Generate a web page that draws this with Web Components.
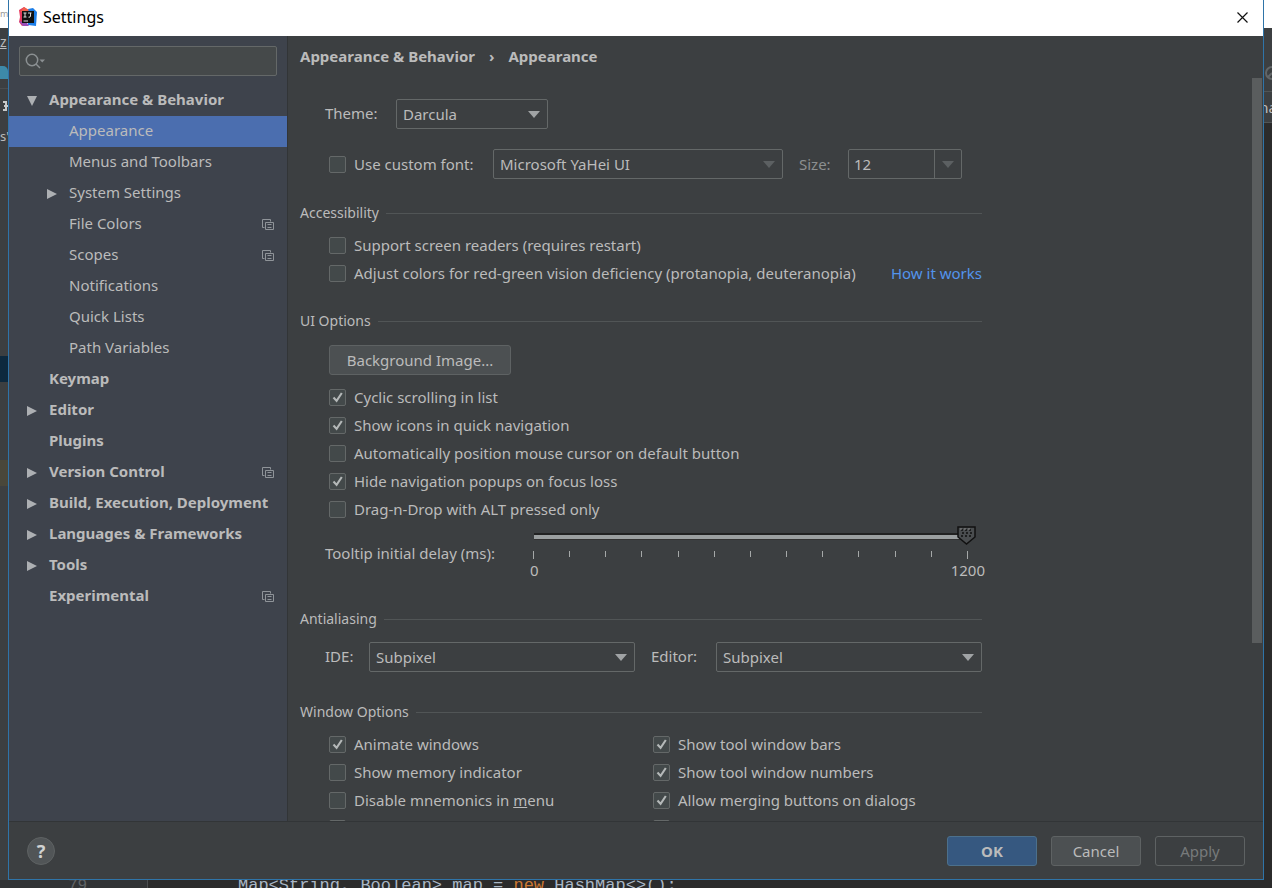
<!DOCTYPE html>
<html lang="en">
<head>
<meta charset="utf-8">
<title>Settings</title>
<style>
:root{
  --panel:#3c3f41;--side:#3e434c;--text:#bbbbbb;--line:#515556;--edge:#646868;
  --field:#45494a;--accent:#4b6eaf;--frame:#2f74a8;
}
html,body{height:100%}
body{margin:0;background:#2b2b2b;color:var(--text);font:15px/20px "Noto Sans","Open Sans",sans-serif;overflow:hidden}
</style>
</head>
<body>
<settings-app></settings-app>

<script>
const define = (name, html, setup) => {
  const t = document.createElement('template');
  t.innerHTML = html;
  customElements.define(name, class extends HTMLElement {
    connectedCallback() {
      if (this.shadowRoot) return;
      const root = this.attachShadow({mode: 'open'});
      root.append(t.content.cloneNode(true));
      if (setup) setup(this, root);
    }
  });
};

/* ---------- controls ---------- */

define('check-box', `
<style>
:host{display:flex;align-items:center;height:28px}
label{display:flex;align-items:center;gap:8px;white-space:nowrap}
input{appearance:none;box-sizing:border-box;margin:0;width:17px;height:17px;flex:none;border:1px solid var(--edge);border-radius:2px;background:#43494a center/15px 15px no-repeat}
input:checked{background-image:url("data:image/svg+xml,%3Csvg xmlns='http://www.w3.org/2000/svg' viewBox='0 0 15 15'%3E%3Cpath d='M3.5 7.5 6.6 10.9 11.8 3' fill='none' stroke='%23b4b8b8' stroke-width='2.1'/%3E%3C/svg%3E")}
</style>
<label><input type="checkbox"><span><slot></slot></span></label>`,
(el, root) => { root.querySelector('input').checked = el.hasAttribute('checked'); });

define('select-field', `
<style>
:host{display:flex;align-items:center}
label{flex:none;width:var(--label,auto);padding-bottom:2px}
select{appearance:none;box-sizing:border-box;flex:1;min-width:0;height:30px;margin:0;padding:0 24px 0 6px;border:1px solid var(--edge);border-radius:2px;font:inherit;color:var(--text);
background:var(--panel) url("data:image/svg+xml,%3Csvg xmlns='http://www.w3.org/2000/svg' viewBox='0 0 12 7'%3E%3Cpath d='M0 0H12L6 7Z' fill='%23a0a3a5'/%3E%3C/svg%3E") right 7px center/12px 7px no-repeat}
:host([dim]) select{background-image:url("data:image/svg+xml,%3Csvg xmlns='http://www.w3.org/2000/svg' viewBox='0 0 12 7'%3E%3Cpath d='M0 0H12L6 7Z' fill='%235c6062'/%3E%3C/svg%3E")}
</style>
<label for="s"></label><select id="s"><option></option></select>`,
(el, root) => {
  const label = root.querySelector('label'), text = el.getAttribute('label');
  if (text) label.textContent = text;
  else { label.remove(); root.querySelector('select').setAttribute('aria-label', el.getAttribute('name')); }
  root.querySelector('option').textContent = el.getAttribute('value');
});

define('size-field', `
<style>
:host{display:flex;align-items:center}
label{width:49px;color:#8c8f90}
div{display:flex;box-sizing:border-box;width:114px;height:30px;border:1px solid var(--edge);border-radius:2px}
input{flex:1;min-width:0;box-sizing:border-box;border:0;padding:0 5px;background:none;color:var(--text);font:inherit}
button{width:27px;padding:0;border:0;border-left:1px solid var(--edge);background:none;display:grid;place-items:center}
</style>
<label for="n">Size:</label>
<div><input id="n" value="12"><button aria-label="Choose size"><svg width="12" height="7"><path d="M0 0H12L6 7Z" fill="#5c6062"/></svg></button></div>`);

define('push-button', `
<style>
:host{display:block}
button{box-sizing:border-box;width:100%;height:30px;padding:0;border:1px solid #5e6263;border-radius:3px;background:#4c5052;color:var(--text);font:inherit}
:host([primary]) button{background:#365880;border-color:#4c708c;font-weight:bold}
:host([off]) button{background:none;color:#777a7b}
</style>
<button><slot></slot></button>`,
(el, root) => { root.querySelector('button').disabled = el.hasAttribute('off'); });

define('delay-slider', `
<style>
:host{display:flex;align-items:center;height:62px;justify-content:space-between}
label{flex:none;padding-bottom:2px}
.scale{width:451px;height:62px;display:grid;grid-template-rows:27px 10px 20px}
input{appearance:none;width:100%;height:27px;margin:0;background:none}
input::-webkit-slider-runnable-track{height:7px;background:linear-gradient(#222 0 2px,#9b9fa0 2px 6px,#333 6px) 9px 0/calc(100% - 18px) 7px no-repeat}
input::-webkit-slider-thumb{appearance:none;width:19px;height:19px;margin:-7px 0 0;border:0;background:url("data:image/svg+xml,%3Csvg xmlns='http://www.w3.org/2000/svg' viewBox='0 0 19 19'%3E%3Cpath d='M1 1H18V11L9.500 18 1 11Z' fill='%234a4d4f' stroke='%23111' stroke-width='1.500'/%3E%3Cpath d='M4 4H6M8 4H10M12 4H14M5 7H7M9 7H11M13 7H15M4 10H6M8 10H10M12 10H14' stroke='%23111' stroke-width='1.500'/%3E%3Cpath d='M3 3H5M7 3H9M11 3H13' stroke='%23888'/%3E%3C/svg%3E") center/19px 19px no-repeat}
.ticks{display:flex;justify-content:space-between;padding:1px 8px 0 8px}
i{width:1px;height:6px;background:#a5a8a8}
i:first-child,i:last-child{height:8px}
.ends{display:flex;justify-content:space-between;margin:0 -9px 0 5px}
</style>
<label for="r">Tooltip initial delay (ms):</label>
<div class="scale"><input id="r" type="range" min="0" max="1200" step="100" value="1200">
<div class="ticks">${'<i></i>'.repeat(13)}</div>
<div class="ends"><span>0</span><span>1200</span></div></div>`);

define('option-group', `
<style>
:host{display:block;margin-top:24px}
h2{display:flex;align-items:center;gap:7px;margin:0;height:20px;font-size:14px;font-weight:normal;white-space:nowrap}
h2::after{content:"";flex:1;height:1px;background:var(--line)}
div{padding:var(--inset,8px) 0 0 29px}
</style>
<h2></h2><div><slot></slot></div>`,
(el, root) => { root.querySelector('h2').textContent = el.getAttribute('heading'); });

/* ---------- sidebar ---------- */

define('tree-item', `
<style>
:host{display:block}
a{display:flex;align-items:center;height:31px;padding:0 13px 0 40px;color:var(--text);text-decoration:none;white-space:nowrap;font-weight:bold}
:host([sub]) a{padding-left:60px;font-weight:normal}
:host([selected]) a{background:var(--accent)}
span{padding-bottom:3px}
.arrow{display:none;width:12px;height:12px;margin:0 11px 0 -23px;fill:#adb0b3}
:host([closed]) .arrow,:host([open]) .arrow{display:block}
:host([open]) .arrow{transform:rotate(90deg)}
.copy{display:none;margin-left:auto;width:12px;height:12px;fill:none;stroke:#8f9499}
:host([shared]) .copy{display:block}
</style>
<a href="#"><svg class="arrow" viewBox="0 0 12 12"><path d="M1 1 11 6 1 11Z"/></svg><span><slot></slot></span>
<svg class="copy" viewBox="0 0 12 12"><path d="M2.500 8.500H.5V.5H8.500V2.500M3.500 3.500H11.500V10.500H3.500ZM5.500 5.500H9.500M5.500 8.500H9.500"/></svg></a>`);

define('search-box', `
<style>
:host{display:flex;align-items:center;box-sizing:border-box;height:30px;margin:10px 10px 9px;padding:0 5px;gap:4px;border:1px solid var(--edge);border-radius:2px;background:var(--field)}
input{flex:1;min-width:0;border:0;padding:0;background:none;color:var(--text);font:inherit;outline:0}
</style>
<svg width="21" height="18" viewBox="0 0 21 18" fill="none" stroke="#8b9092" stroke-width="1.500"><circle cx="7" cy="8" r="5.700"/><path d="M11 12 15 16"/><path d="M14.500 7.500H20L17.250 10.500Z" fill="#8b9092" stroke="none"/></svg>
<input type="search" aria-label="Search settings">`);

define('settings-tree', `
<style>
:host{display:block;background:var(--side);border-right:1px solid #323537;overflow:hidden}
</style>
<search-box></search-box>
<nav>
<tree-item open>Appearance &amp; Behavior</tree-item>
<tree-item sub selected>Appearance</tree-item>
<tree-item sub>Menus and Toolbars</tree-item>
<tree-item sub closed>System Settings</tree-item>
<tree-item sub shared>File Colors</tree-item>
<tree-item sub shared>Scopes</tree-item>
<tree-item sub>Notifications</tree-item>
<tree-item sub>Quick Lists</tree-item>
<tree-item sub>Path Variables</tree-item>
<tree-item>Keymap</tree-item>
<tree-item closed>Editor</tree-item>
<tree-item>Plugins</tree-item>
<tree-item closed shared>Version Control</tree-item>
<tree-item closed>Build, Execution, Deployment</tree-item>
<tree-item closed>Languages &amp; Frameworks</tree-item>
<tree-item closed>Tools</tree-item>
<tree-item shared>Experimental</tree-item>
</nav>`);

/* ---------- main panel ---------- */

define('appearance-page', `
<style>
:host{display:grid;grid-template-rows:42px 1fr;min-width:0;min-height:0;background:var(--panel)}
h1{display:flex;align-items:center;gap:14px;margin:0;padding:0 0 2px 12px;font-size:15px}
.view{display:grid;grid-template-columns:1fr 11px;min-height:0;overflow:hidden}
.thumb{height:76%;background:#5a5d5e;margin-right:1px}
.body{min-height:0;box-sizing:border-box;max-width:694px;padding:21px 0 0 12px}
.theme{width:223px;margin-left:25px;--label:71px}
.font{display:flex;margin:20px 0 0 29px;height:30px;align-items:center}
.font check-box{width:164px}
.font select-field{width:290px;margin-right:16px}
.link{display:flex;align-items:center;justify-content:space-between;white-space:nowrap}
a{color:#5394ec;text-decoration:none}
.ui{--inset:14px}
.ui push-button{width:182px;margin-bottom:8px}
delay-slider{margin:0 6px 0 -4px}
.aa{--inset:13px}
.pair{display:flex;gap:16px;margin-left:-4px}
.pair select-field:first-child{flex:1 1 310px;--label:44px}
.pair select-field{flex:1 1 331px;--label:65px}
.win{margin-top:30px}
.cols{display:grid;grid-template-columns:324px 1fr}
</style>
<h1><span>Appearance &amp; Behavior</span><span>›</span><span>Appearance</span></h1>
<div class="view"><div class="body">
<select-field class="theme" label="Theme:" value="Darcula"></select-field>
<div class="font"><check-box>Use custom font:</check-box><select-field dim name="Font" value="Microsoft YaHei UI"></select-field><size-field></size-field></div>
<option-group heading="Accessibility">
<check-box>Support screen readers (requires restart)</check-box>
<div class="link"><check-box>Adjust colors for red-green vision deficiency (protanopia, deuteranopia)</check-box><a href="#">How it works</a></div>
</option-group>
<option-group class="ui" heading="UI Options">
<push-button>Background Image...</push-button>
<check-box checked>Cyclic scrolling in list</check-box>
<check-box checked>Show icons in quick navigation</check-box>
<check-box>Automatically position mouse cursor on default button</check-box>
<check-box checked>Hide navigation popups on focus loss</check-box>
<check-box>Drag-n-Drop with ALT pressed only</check-box>
<delay-slider></delay-slider>
</option-group>
<option-group class="aa" heading="Antialiasing">
<div class="pair"><select-field label="IDE:" value="Subpixel"></select-field><select-field label="Editor:" value="Subpixel"></select-field></div>
</option-group>
<option-group class="win" heading="Window Options">
<div class="cols">
<check-box checked>Animate windows</check-box><check-box checked>Show tool window bars</check-box>
<check-box>Show memory indicator</check-box><check-box checked>Show tool window numbers</check-box>
<check-box>Disable mnemonics in <u>m</u>enu</check-box><check-box checked>Allow merging buttons on dialogs</check-box>
<check-box></check-box><check-box></check-box>
</div>
</option-group>
</div><div class="thumb"></div></div>`);

/* ---------- window ---------- */

define('title-bar', `
<style>
:host{display:flex;align-items:center;box-sizing:border-box;height:36px;padding:0 13px 2px 9px;background:#fff;color:#000}
span{flex:1;margin-left:6px;font-size:16px}
button{width:16px;height:16px;padding:0;border:0;background:none;display:grid;place-items:center}
</style>
<svg width="19" height="20" viewBox="0 0 19 20"><path d="M1 3 6 0 10 3 9 17 4 19 1 15 2 10Z" fill="#e8385e"/><path d="M10 2 15 1 19 5 18 19 10 18Z" fill="#1c7ee8"/><path d="M6 0 11 3 9 5 2 5Z" fill="#f0604c"/><path d="M1 14 9 16 11 19 5 19Z" fill="#9a4fb8"/><path d="M4 4H16V16H4Z" fill="#111"/><path d="M5.500 6H8.500M7 6V10M5.500 10H8.500M10 6H13.500M12.500 6V9Q12.500 10.500 10.500 10.200" fill="none" stroke="#ddd"/><path d="M5.500 14H10" stroke="#ddd"/></svg>
<span>Settings</span>
<button aria-label="Close"><svg width="11" height="11" viewBox="0 0 11 11"><path d="M.5.5 10.500 10.500M10.500.5.5 10.500" stroke="#111" stroke-width="1.200"/></svg></button>`);

define('button-bar', `
<style>
:host{display:flex;align-items:center;gap:14px;height:57px;padding:0 18px;border-top:1px solid #323537;background:var(--panel)}
.help{width:28px;height:28px;margin-right:auto;padding:0;border:1px solid #5e6263;border-radius:50%;background:#515557;color:#d0d2d2;font:bold 18px/24px "Noto Sans",sans-serif}
push-button{width:90px}
</style>
<button class="help" aria-label="Help">?</button>
<push-button primary>OK</push-button><push-button>Cancel</push-button><push-button off>Apply</push-button>`);

define('settings-dialog', `
<style>
:host{display:grid;grid-template-rows:36px 1fr auto;box-sizing:border-box;min-height:0;border:1px solid var(--frame);border-top:0}
main{display:grid;grid-template-columns:279px 1fr;min-height:0}
</style>
<title-bar></title-bar>
<main><settings-tree></settings-tree><appearance-page></appearance-page></main>
<button-bar></button-bar>`);

/* ---------- editor window visible around the dialog ---------- */

define('editor-left', `
<style>
:host{display:flex;flex-direction:column;overflow:hidden;background:#3c3f41;white-space:nowrap;font-size:14px}
div{flex:none;height:28px;line-height:28px}
.top{background:#fff;color:#999;font-size:9px}
.folder{height:32px;display:flex;align-items:center}
.folder i{width:8px;height:13px;background:#3d8aa9;border-radius:0 5px 0 0}
.tab{height:33px;border-top:1px solid #4a4d4f;display:flex;align-items:center;justify-content:end}
.blue{height:26px;background:#0d293e}
.olive{height:26px;background:#49473a}
.path{font-size:13px}
</style>
<div class="top">m</div><div><u>z</u></div><div class="folder"><i></i></div>
<div class="tab"><svg width="5" height="10" fill="#c8caca"><path d="M0 0H4V4H5V6H4V10H0V8H2V6H1V4H2V2H0Z"/></svg></div><div class="path">s'</div>
<div style="height:206px"></div><div class="blue"></div><div style="height:78px"></div><div class="olive"></div>`);

define('editor-right', `
<style>
:host{display:flex;flex-direction:column;overflow:hidden;background:#2b2b2b;white-space:nowrap}
div{flex:none}
.top{height:28px;background:#fff}
.bar{height:63px;background:#3c3f41;display:flex;align-items:center;padding-top:0}
.bar svg{margin-top:26px}
.tab{height:30px;line-height:30px;background:#3c3f41;border-top:1px solid #515556;border-bottom:1px solid #515556;display:flex;justify-content:center}
</style>
<div class="top"></div><div class="bar"><svg width="8" height="16" fill="none" stroke="#626668" stroke-width="2"><circle cx="8" cy="8" r="6"/><path d="M4 12 8 8"/></svg></div><div class="tab">na</div>`);

define('editor-line', `
<style>
:host{display:flex;overflow:hidden;background:#2b2b2b;color:#a9b7c6;font:17px/20px "Liberation Mono",monospace;white-space:pre}
.no{box-sizing:border-box;flex:none;width:148px;padding-left:68px;background:#313335;border-right:1px solid #4a4d4f;color:#606366;font-size:16px}
code{font:inherit;padding-left:90px;margin-top:-4px}
.no span{display:block;margin-top:-4px}
b{font-weight:normal;color:#cc7832}
</style>
<div class="no"><span>79</span></div><code>Map&lt;String, Boolean&gt; map = <b>new</b> HashMap&lt;&gt;();</code>`);

define('settings-app', `
<style>
:host{display:grid;height:100vh;grid-template:minmax(0,1fr) 8px / 8px minmax(0,1fr) 8px}
editor-line{grid-column:1/-1}
</style>
<editor-left></editor-left><settings-dialog></settings-dialog><editor-right></editor-right><editor-line></editor-line>`);
</script>
</body>
</html>
